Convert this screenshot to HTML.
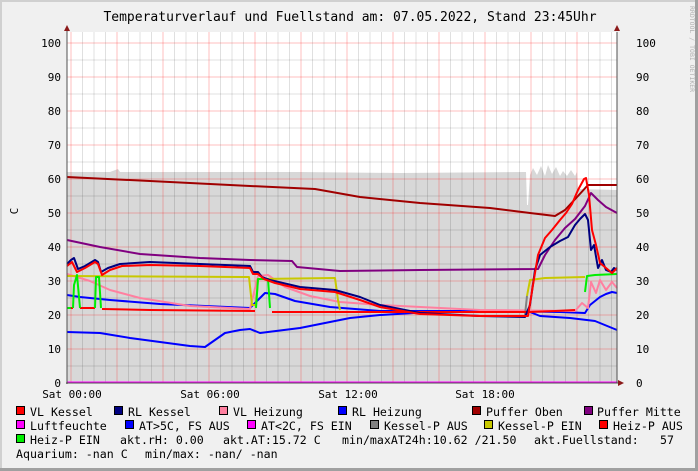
<!DOCTYPE html>
<html><head><meta charset="utf-8"><style>
html,body{margin:0;padding:0;background:#f0f0f0}
svg{display:block}
text{font-family:"DejaVu Sans Mono","Liberation Mono",monospace;fill:#000}
</style></head><body>
<svg width="698" height="471" viewBox="0 0 698 471" xmlns="http://www.w3.org/2000/svg">
<rect x="0" y="0" width="698" height="471" fill="#f0f0f0"/>
<rect x="0" y="0" width="698" height="2" fill="#d0d0d0"/>
<rect x="0" y="0" width="2" height="471" fill="#d0d0d0"/>
<rect x="695" y="0" width="3" height="471" fill="#a0a0a0"/>
<rect x="0" y="468" width="698" height="3" fill="#a0a0a0"/>
<text x="350" y="21" font-size="13" text-anchor="middle">Temperaturverlauf und Fuellstand am: 07.05.2022, Stand 23:45Uhr</text>
<text transform="translate(690,6) rotate(90)" font-size="6.5" style="fill:#b0b0b0">RRDTOOL / TOBI OETIKER</text>
<text transform="translate(18,211) rotate(-90)" font-size="11" text-anchor="middle">C</text>
<rect x="67" y="32" width="550" height="351" fill="#ffffff"/>
<path d="M67,383 L67,172 L110,172 L118,169 L120,172 L300,172 L400,173 L526,172 L527,205 L528,205 L530,175 L533,168 L537,175 L541,166 L545,176 L548,165 L552,174 L556,167 L560,176 L563,171 L567,176 L571,170 L575,176 L577,172 L578,189 L617,190 L617,383 Z" fill="#d8d8d8"/>
<g stroke-width="1">
<g stroke="#000" stroke-opacity="0.12">
<path d="M67,366H617M67,332H617M67,298H617M67,264H617M67,230H617M67,196H617M67,162H617M67,128H617M67,94H617M67,60H617"/>
<path d="M82.5,32V383M94,32V383M105.5,32V383M128.5,32V383M140,32V383M151.5,32V383M174.5,32V383M186,32V383M197.5,32V383M220.5,32V383M232,32V383M243.5,32V383M266.5,32V383M278,32V383M289.5,32V383M312.5,32V383M324,32V383M335.5,32V383M358.5,32V383M370,32V383M381.5,32V383M404.5,32V383M416,32V383M427.5,32V383M450.5,32V383M462,32V383M473.5,32V383M496.5,32V383M508,32V383M519.5,32V383M542.5,32V383M554,32V383M565.5,32V383M588.5,32V383M600,32V383M611.5,32V383"/>
</g>
<g stroke="#ff0000" stroke-opacity="0.25">
<path d="M67,349H617M67,315H617M67,281H617M67,247H617M67,213H617M67,179H617M67,145H617M67,111H617M67,77H617M67,43H617"/>
<path d="M71,32V383M117,32V383M163,32V383M209,32V383M255,32V383M301,32V383M347,32V383M393,32V383M439,32V383M485,32V383M531,32V383M577,32V383"/>
</g>
</g>
<g fill="none" stroke-width="2" stroke-linejoin="round">
<path stroke="#a00000" d="M67,177 L150,181 L250,186 L315,189 L360,197 L420,203 L490,208 L530,213 L555,216 L565,210 L578,196 L588,185 L617,185"/>
<path stroke="#800080" d="M67,240 L100,247 L140,254 L200,258 L250,260 L292,261 L297,267 L340,271 L420,270 L538,269 L545,255 L555,240 L565,228 L575,219 L585,206 L591,193 L598,200 L606,207 L617,213"/>
<path stroke="#0000ff" d="M67,295 L80,297 L110,300 L160,304 L250,308 L258,300 L265,293 L275,294 L295,301 L330,307 L380,311 L500,311 L560,312 L585,313 L590,305 L595,301 L600,297 L606,294 L612,292 L617,293"/>
<path stroke="#0000ff" d="M67,332 L100,333 L130,338 L160,342 L190,346 L205,347 L215,340 L225,333 L240,330 L250,329 L260,333 L300,328 L330,322 L350,318 L380,315 L430,312 L530,312 L540,316 L570,318 L595,321 L617,330"/>
<path stroke="#ff80a0" d="M67,274 L90,281 L110,290 L140,298 L190,306 L250,309 L258,276 L268,275 L285,287 L310,296 L340,302 L380,305 L480,310 L575,311 L582,303 L588,308 L591,282 L596,293 L600,280 L606,290 L612,282 L617,288"/>
<path stroke="#c8c800" d="M67,276 L245,277 L249,277 L252,305 L256,305 L258,279 L335,278 L338,300 L340,310"/>
<path stroke="#c8c800" d="M527,296 L530,280 L545,278 L585,277"/>
<path stroke="#808080" d="M525,315 L527,296"/>
<path stroke="#ff0000" d="M67,308 L73,308 M80,308 L95,308 M102,309 L150,310 L255,311 M272,312 L400,312 L530,312 L555,311 L575,310"/>
<path stroke="#00ee00" d="M67,308 L71,308 M73,308 L74,285 L77,275 L80,308 M95,308 L96,277 L99,277 L101,308 M256,308 L258,279 L268,279 L270,308 M585,292 L587,276 L595,275 L617,274"/>
<path stroke="#000080" d="M67,264 L71,260 L74,258 L78,269 L85,266 L95,260 L98,262 L101,272 L108,268 L120,264 L150,262 L200,264 L250,266 L253,272 L258,272 L262,277 L270,280 L300,287 L335,290 L360,297 L380,305 L420,313 L480,316 L525,317 L530,305 L535,270 L540,255 L550,247 L560,241 L568,237 L575,225 L580,219 L585,214 L588,220 L591,250 L594,245 L598,268 L602,260 L606,270 L611,272 L614,268 L617,270"/>
<path stroke="#ff0000" d="M67,266 L72,262 L77,272 L85,268 L95,262 L98,264 L102,275 L110,270 L122,266 L150,265 L200,266 L250,268 L253,274 L258,274 L264,279 L275,283 L300,289 L335,292 L360,300 L380,307 L420,314 L480,316 L528,316 L533,285 L538,255 L545,238 L552,230 L560,220 L566,213 L572,204 L578,190 L584,179 L586,178 L589,195 L592,230 L596,245 L600,263 L606,268 L612,273 L617,268"/>
<path stroke="#ff00ff" d="M67,382.5 L617,382.5"/>
</g>
<path d="M67,30 V384 M66,383 H620" stroke="#505050" stroke-width="1" fill="none"/>
<path d="M67,25 L64,31 L70,31 Z M624,383 L618,380 L618,386 Z" fill="#8b1a1a"/>
<path d="M617,25 L614,31 L620,31 Z" fill="#8b1a1a"/>
<path d="M617,32 V383" stroke="#505050" stroke-width="1"/>
<g font-size="11" text-anchor="end">
<text x="61" y="387">0</text><text x="61" y="353">10</text><text x="61" y="319">20</text><text x="61" y="285">30</text><text x="61" y="251">40</text><text x="61" y="217">50</text><text x="61" y="183">60</text><text x="61" y="149">70</text><text x="61" y="115">80</text><text x="61" y="81">90</text><text x="61" y="47">100</text>
</g>
<g font-size="11" text-anchor="start">
<text x="636" y="387">0</text><text x="636" y="353">10</text><text x="636" y="319">20</text><text x="636" y="285">30</text><text x="636" y="251">40</text><text x="636" y="217">50</text><text x="636" y="183">60</text><text x="636" y="149">70</text><text x="636" y="115">80</text><text x="636" y="81">90</text><text x="636" y="47">100</text>
</g>
<g font-size="11" text-anchor="middle">
<text x="72" y="398">Sat 00:00</text><text x="210" y="398">Sat 06:00</text><text x="348" y="398">Sat 12:00</text><text x="485" y="398">Sat 18:00</text>
</g>
<g stroke="#000" stroke-width="1">
<rect x="16.5" y="406.5" width="8" height="8" fill="#ff0000"/>
<rect x="114.5" y="406.5" width="8" height="8" fill="#000080"/>
<rect x="219.5" y="406.5" width="8" height="8" fill="#ff80a0"/>
<rect x="338.5" y="406.5" width="8" height="8" fill="#0000ff"/>
<rect x="472.5" y="406.5" width="8" height="8" fill="#a00000"/>
<rect x="584.5" y="406.5" width="8" height="8" fill="#800080"/>
<rect x="16.5" y="420.5" width="8" height="8" fill="#ff00ff"/>
<rect x="125.5" y="420.5" width="8" height="8" fill="#0000ff"/>
<rect x="247.5" y="420.5" width="8" height="8" fill="#ff00ff"/>
<rect x="370.5" y="420.5" width="8" height="8" fill="#808080"/>
<rect x="484.5" y="420.5" width="8" height="8" fill="#c8c800"/>
<rect x="599.5" y="420.5" width="8" height="8" fill="#ff0000"/>
<rect x="16.5" y="434.5" width="8" height="8" fill="#00ee00"/>
</g>
<g font-size="11.6">
<text x="30" y="416">VL Kessel</text>
<text x="128" y="416">RL Kessel</text>
<text x="233" y="416">VL Heizung</text>
<text x="352" y="416">RL Heizung</text>
<text x="486" y="416">Puffer Oben</text>
<text x="597" y="416">Puffer Mitte</text>
<text x="30" y="430">Luftfeuchte</text>
<text x="139" y="430">AT&gt;5C, FS AUS</text>
<text x="261" y="430">AT&lt;2C, FS EIN</text>
<text x="384" y="430">Kessel-P AUS</text>
<text x="498" y="430">Kessel-P EIN</text>
<text x="613" y="430">Heiz-P AUS</text>
<text x="30" y="444">Heiz-P EIN</text>
<text x="120" y="444">akt.rH: 0.00</text>
<text x="223" y="444">akt.AT:15.72 C</text>
<text x="342" y="444">min/maxAT24h:10.62 /21.50</text>
<text x="534" y="444">akt.Fuellstand:</text>
<text x="660" y="444">57</text>
<text x="16" y="458">Aquarium: -nan C</text>
<text x="145" y="458">min/max: -nan/ -nan</text>
</g>
</svg>
</body></html>
